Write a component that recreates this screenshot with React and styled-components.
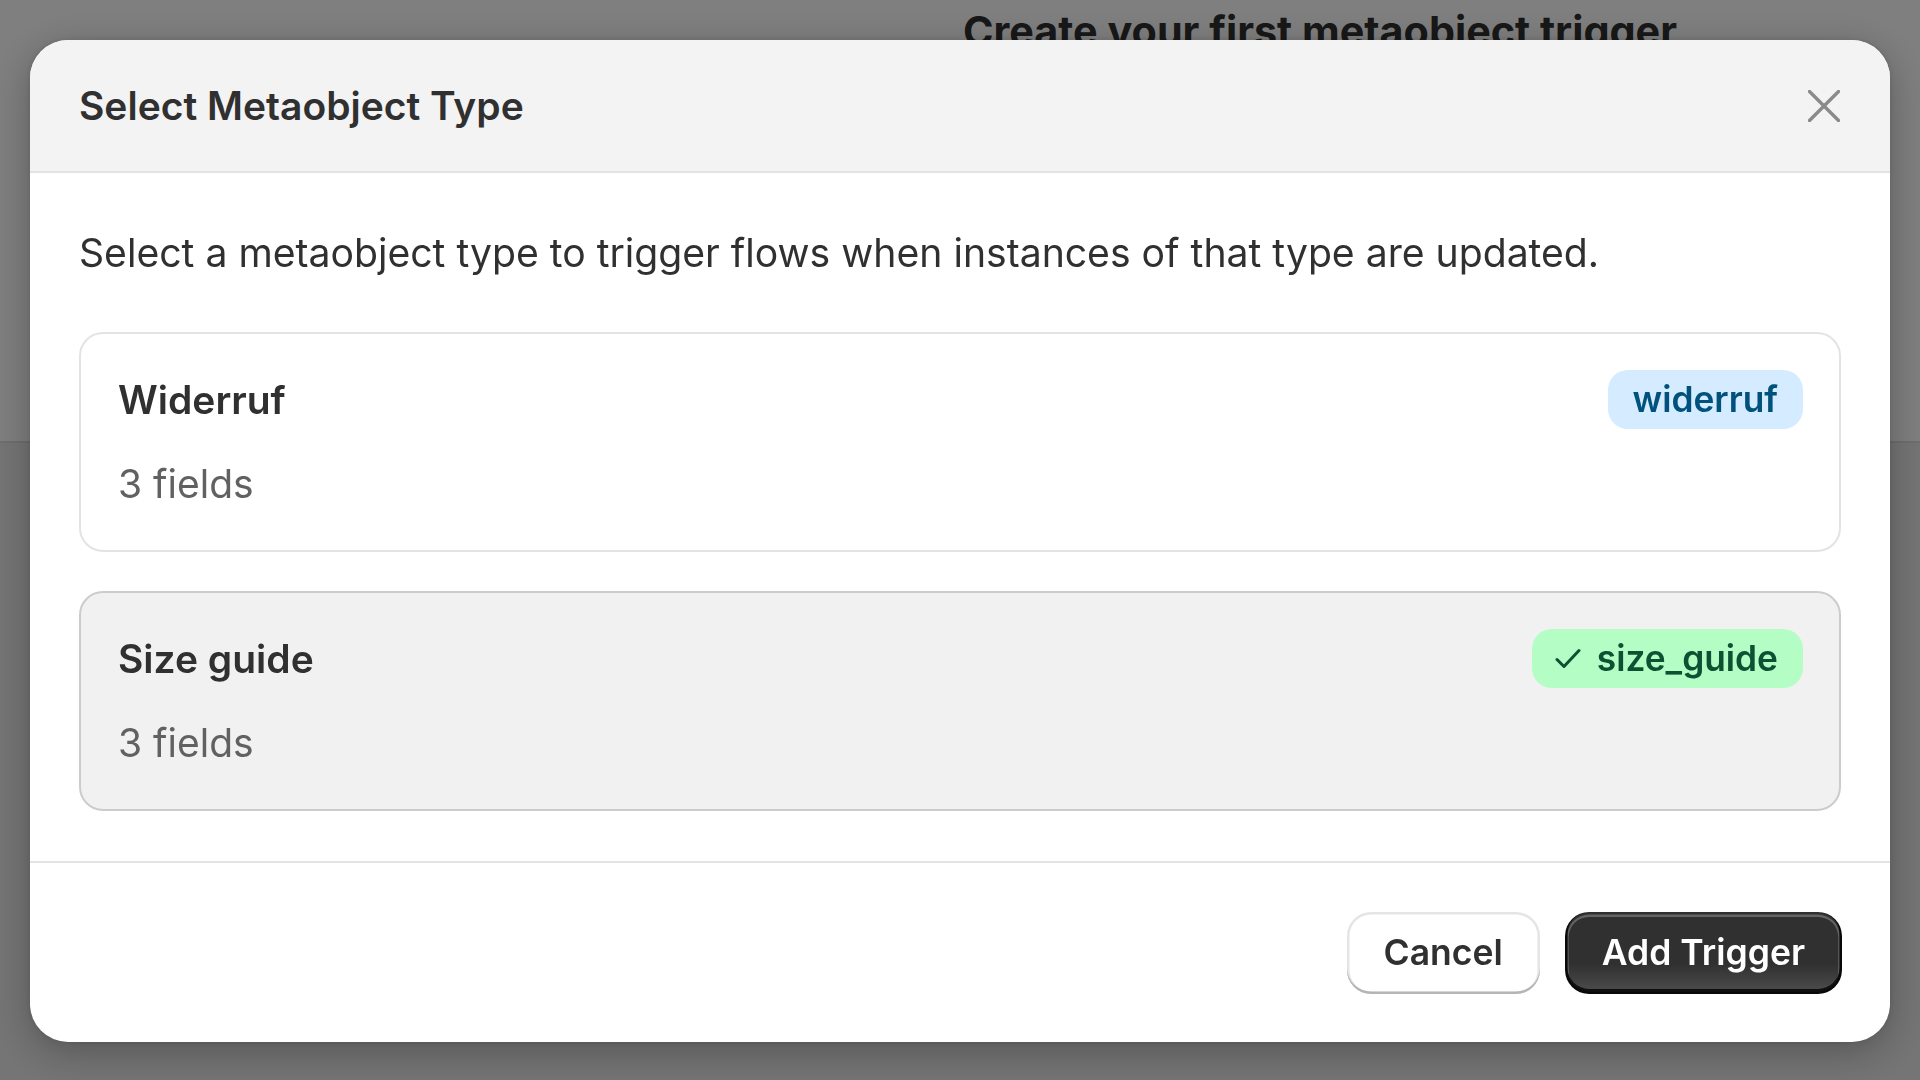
import React, { useState } from 'react'
import styled, { createGlobalStyle } from 'styled-components'

const GlobalStyle = createGlobalStyle`
  html, body {
    margin: 0;
    padding: 0;
    width: 100%;
    height: 100%;
  }
  body {
    font-family: Inter, "Noto Sans", "Liberation Sans", sans-serif;
    color: #303030;
    overflow: hidden;
  }
  * { box-sizing: border-box; }
`

// the page that sits behind the dimmed overlay
const Page = styled.div`
  width: 1920px;
  height: 1080px;
  display: flex;
  flex-direction: column;
  background: #ebebeb;
`

const PageTop = styled.div`
  height: 443px;
  background: #ffffff;
  border-bottom: 2px solid #dedede;
  padding: 6px 0 0 963px;
`

const PageHeading = styled.h1`
  margin: 0;
  font-size: 41.3px;
  line-height: 50px;
  font-weight: 700;
  color: #303030;
`

const Overlay = styled.div`
  position: fixed;
  inset: 0;
  background: rgba(0, 0, 0, 0.5);
  display: flex;
  padding: 40px 30px 38px 30px;
`

const Modal = styled.div`
  flex: 1;
  display: flex;
  flex-direction: column;
  background: #ffffff;
  border-radius: 38px;
  overflow: hidden;
  box-shadow: 0 10px 40px rgba(0, 0, 0, 0.28), 0 0 6px rgba(0, 0, 0, 0.12);
`

const Header = styled.div`
  height: 133px;
  flex-shrink: 0;
  display: flex;
  align-items: center;
  justify-content: space-between;
  padding: 0 50px 0 49px;
  background: #f3f3f3;
  border-bottom: 2px solid #e3e3e3;
`

const Title = styled.h2`
  margin: 0;
  font-size: 39px;
  line-height: 48px;
  font-weight: 600;
  color: #303030;
`

const CloseButton = styled.button`
  width: 32px;
  height: 32px;
  padding: 0;
  border: 0;
  background: none;
  display: flex;
  align-items: center;
  justify-content: center;
  cursor: pointer;
`

const Body = styled.div`
  flex: 1;
  padding: 56px 49px 0 49px;
`

const Description = styled.p`
  margin: 0 0 55px 0;
  font-size: 39.15px;
  line-height: 48px;
  font-weight: 400;
  color: #303030;
`

const OptionList = styled.div`
  display: flex;
  flex-direction: column;
  gap: 39px;
`

const OptionCard = styled.div`
  border-radius: 24px;
  padding: 36px 36px 42px 37px;
  border: 2px solid ${p => (p.$selected ? '#cccccc' : '#e3e3e3')};
  background: ${p => (p.$selected ? '#f1f1f1' : '#ffffff')};
  cursor: pointer;
`

const CardHead = styled.div`
  height: 59px;
  display: flex;
  align-items: center;
  justify-content: space-between;
`

const CardTitle = styled.div`
  font-size: 39px;
  line-height: 48px;
  font-weight: 600;
  color: #303030;
`

const Fields = styled.div`
  margin-top: 31px;
  font-size: 39px;
  line-height: 48px;
  color: #616161;
`

const Badge = styled.span`
  height: 59px;
  display: inline-flex;
  align-items: center;
  gap: 16px;
  padding: 0 25px 0 ${p => (p.$tone === 'success' ? '23px' : '25px')};
  border-radius: 20px;
  font-size: 35.3px;
  font-weight: 600;
  background: ${p => (p.$tone === 'success' ? '#b4fdc5' : '#d5ebff')};
  color: ${p => (p.$tone === 'success' ? '#0c5132' : '#00527c')};
`

const Footer = styled.div`
  height: 181px;
  flex-shrink: 0;
  display: flex;
  align-items: center;
  justify-content: flex-end;
  gap: 25px;
  padding: 0 48px;
  border-top: 2px solid #e3e3e3;
`

const Button = styled.button`
  height: 82px;
  padding: 0 37px;
  border: 0;
  border-radius: 24px;
  font-family: inherit;
  font-size: 35.5px;
  font-weight: 600;
  cursor: pointer;
  background: ${p =>
    p.$primary
      ? 'linear-gradient(180deg, rgba(48,48,48,0) 63%, rgba(255,255,255,0.15)), #303030'
      : '#ffffff'};
  color: ${p => (p.$primary ? '#ffffff' : '#303030')};
  box-shadow: ${p =>
    p.$primary
      ? 'inset 0 -2.5px 0 2.5px rgba(0,0,0,0.8), inset 0 0 0 2.5px #303030, inset 0 1.2px 0 3.7px rgba(255,255,255,0.25)'
      : 'inset 0 -2.5px 0 0 #b5b5b5, inset 0 0 0 2.5px rgba(0,0,0,0.1), inset 0 1.2px 0 3.7px #ffffff'};
`

function CloseIcon() {
  return (
    <svg width="32" height="32" viewBox="0 0 32 32" fill="none">
      <path d="M1.5 1.5 L30.5 30.5 M30.5 1.5 L1.5 30.5" stroke="#8a8a8a" strokeWidth="3.4" strokeLinecap="round" />
    </svg>
  )
}

function CheckIcon() {
  return (
    <svg width="26" height="22" viewBox="0 0 26 22" fill="none">
      <path d="M2 11.5 L9 18.5 L24 2.5" stroke="#0c5132" strokeWidth="3" strokeLinecap="round" strokeLinejoin="round" />
    </svg>
  )
}

const types = [
  { name: 'Widerruf', handle: 'widerruf', fields: 3 },
  { name: 'Size guide', handle: 'size_guide', fields: 3 },
]

function App() {
  const [selected, setSelected] = useState('size_guide')

  return (
    <>
      <GlobalStyle />
      <Page>
        <PageTop>
          <PageHeading>Create your first metaobject trigger</PageHeading>
        </PageTop>
      </Page>
      <Overlay>
        <Modal>
          <Header>
            <Title>Select Metaobject Type</Title>
            <CloseButton aria-label="Close">
              <CloseIcon />
            </CloseButton>
          </Header>
          <Body>
            <Description>
              Select a metaobject type to trigger flows when instances of that type are updated.
            </Description>
            <OptionList>
              {types.map(t => {
                const isSel = t.handle === selected
                return (
                  <OptionCard key={t.handle} $selected={isSel} onClick={() => setSelected(t.handle)}>
                    <CardHead>
                      <CardTitle>{t.name}</CardTitle>
                      <Badge $tone={isSel ? 'success' : 'info'}>
                        {isSel && <CheckIcon />}
                        {t.handle}
                      </Badge>
                    </CardHead>
                    <Fields>{t.fields} fields</Fields>
                  </OptionCard>
                )
              })}
            </OptionList>
          </Body>
          <Footer>
            <Button>Cancel</Button>
            <Button $primary>Add Trigger</Button>
          </Footer>
        </Modal>
      </Overlay>
    </>
  )
}

export default App
